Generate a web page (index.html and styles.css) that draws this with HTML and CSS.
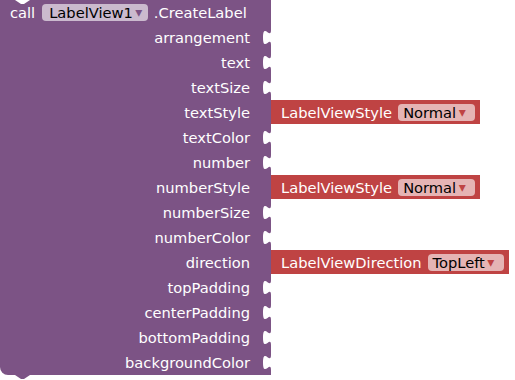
FILE: index.html
```html
<!DOCTYPE html>
<html>
<head>
<meta charset="utf-8">
<link rel="stylesheet" href="styles.css">
</head>
<body>
<div class="block">
  <div class="row">
    <div class="cell head">
      <span class="lbl">call</span>
      <span class="pill pill-p">LabelView1<span class="arr arr-p">▾</span></span>
      <span class="lbl">.CreateLabel</span>
    </div>
  </div>
  <div class="row"><div class="cell"><span class="lbl">arrangement</span><svg class="notch" width="8" height="25" viewBox="0 0 8 25"><path d="M8,5 C8,15 0,-3 0,12.5 C0,28 8,10 8,20 Z"/></svg></div></div>
  <div class="row"><div class="cell"><span class="lbl">text</span><svg class="notch" width="8" height="25" viewBox="0 0 8 25"><path d="M8,5 C8,15 0,-3 0,12.5 C0,28 8,10 8,20 Z"/></svg></div></div>
  <div class="row"><div class="cell"><span class="lbl">textSize</span><svg class="notch" width="8" height="25" viewBox="0 0 8 25"><path d="M8,5 C8,15 0,-3 0,12.5 C0,28 8,10 8,20 Z"/></svg></div></div>
  <div class="row">
    <div class="cell"><span class="lbl">textStyle</span><span class="gap"></span></div>
    <div class="helper">
      <svg class="tab" width="8" height="24" viewBox="0 0 8 24"><path d="M8,5 C8,15 0,-3 0,12.5 C0,28 8,10 8,20 Z"/></svg>
      <div class="hbody"><span class="lbl">LabelViewStyle</span><span class="pill pill-r">Normal<span class="arr arr-r">▾</span></span></div>
    </div>
  </div>
  <div class="row"><div class="cell"><span class="lbl">textColor</span><svg class="notch" width="8" height="25" viewBox="0 0 8 25"><path d="M8,5 C8,15 0,-3 0,12.5 C0,28 8,10 8,20 Z"/></svg></div></div>
  <div class="row"><div class="cell"><span class="lbl">number</span><svg class="notch" width="8" height="25" viewBox="0 0 8 25"><path d="M8,5 C8,15 0,-3 0,12.5 C0,28 8,10 8,20 Z"/></svg></div></div>
  <div class="row">
    <div class="cell"><span class="lbl">numberStyle</span><span class="gap"></span></div>
    <div class="helper">
      <svg class="tab" width="8" height="24" viewBox="0 0 8 24"><path d="M8,5 C8,15 0,-3 0,12.5 C0,28 8,10 8,20 Z"/></svg>
      <div class="hbody"><span class="lbl">LabelViewStyle</span><span class="pill pill-r">Normal<span class="arr arr-r">▾</span></span></div>
    </div>
  </div>
  <div class="row"><div class="cell"><span class="lbl">numberSize</span><svg class="notch" width="8" height="25" viewBox="0 0 8 25"><path d="M8,5 C8,15 0,-3 0,12.5 C0,28 8,10 8,20 Z"/></svg></div></div>
  <div class="row"><div class="cell"><span class="lbl">numberColor</span><svg class="notch" width="8" height="25" viewBox="0 0 8 25"><path d="M8,5 C8,15 0,-3 0,12.5 C0,28 8,10 8,20 Z"/></svg></div></div>
  <div class="row">
    <div class="cell"><span class="lbl">direction</span><span class="gap"></span></div>
    <div class="helper">
      <svg class="tab" width="8" height="24" viewBox="0 0 8 24"><path d="M8,5 C8,15 0,-3 0,12.5 C0,28 8,10 8,20 Z"/></svg>
      <div class="hbody"><span class="lbl">LabelViewDirection</span><span class="pill pill-r">TopLeft<span class="arr arr-r">▾</span></span></div>
    </div>
  </div>
  <div class="row"><div class="cell"><span class="lbl">topPadding</span><svg class="notch" width="8" height="25" viewBox="0 0 8 25"><path d="M8,5 C8,15 0,-3 0,12.5 C0,28 8,10 8,20 Z"/></svg></div></div>
  <div class="row"><div class="cell"><span class="lbl">centerPadding</span><svg class="notch" width="8" height="25" viewBox="0 0 8 25"><path d="M8,5 C8,15 0,-3 0,12.5 C0,28 8,10 8,20 Z"/></svg></div></div>
  <div class="row"><div class="cell"><span class="lbl">bottomPadding</span><svg class="notch" width="8" height="25" viewBox="0 0 8 25"><path d="M8,5 C8,15 0,-3 0,12.5 C0,28 8,10 8,20 Z"/></svg></div></div>
  <div class="row"><div class="cell last"><span class="lbl">backgroundColor</span><svg class="notch" width="8" height="25" viewBox="0 0 8 25"><path d="M8,5 C8,15 0,-3 0,12.5 C0,28 8,10 8,20 Z"/></svg></div></div>
</div>
</body>
</html>
```

FILE: styles.css
```css
html, body {
  margin: 0;
  padding: 0;
  background: #ffffff;
}
body {
  font-family: "DejaVu Sans", "Liberation Sans", sans-serif;
  font-size: 14.67px;
  color: #ffffff;
  width: 515px;
  height: 380px;
  overflow: hidden;
}
.block {
  display: flex;
  flex-direction: column;
}
.row {
  display: flex;
  align-items: flex-start;
  height: 25px;
}
.cell {
  position: relative;
  width: 271px;
  height: 25px;
  box-sizing: border-box;
  background: #7c5385;
  display: flex;
  align-items: center;
  justify-content: flex-end;
  flex: none;
}
.cell .lbl {
  margin-right: 13px;
  line-height: 25px;
  white-space: nowrap;
}
.notch {
  display: block;
  flex: none;
}
.notch path {
  fill: #ffffff;
}
.gap {
  display: block;
  width: 8px;
  flex: none;
}
.head {
  justify-content: flex-start;
  padding-left: 10px;
  gap: 6px;
}
.head .lbl {
  margin-right: 0;
}
.head::before {
  content: "";
  position: absolute;
  left: 15px;
  top: 0;
  width: 15px;
  height: 4px;
  background: #ffffff;
  clip-path: polygon(0 0, 40% 100%, 60% 100%, 100% 0);
}
.last {
  border-bottom-left-radius: 8px;
}
.last::after {
  content: "";
  position: absolute;
  left: 15px;
  top: 25px;
  width: 15px;
  height: 4px;
  background: #7c5385;
  clip-path: polygon(0 0, 40% 100%, 60% 100%, 100% 0);
}
.pill {
  display: inline-flex;
  align-items: center;
  height: 17px;
  border-radius: 4px;
  color: #000000;
  line-height: 17px;
  white-space: nowrap;
}
.pill-p {
  background: #cbbace;
  padding: 0 5px 0 7px;
  margin-left: 1px;
}
.pill-r {
  background: #e5b4b4;
  padding: 0 9px 0 5px;
  margin-left: 6px;
}
.arr {
  display: inline-block;
  width: 8px;
  text-align: center;
  font-size: 14px;
  margin-left: 2px;
}
.arr-p {
  color: #7c5385;
}
.arr-r {
  color: #bf4343;
}
.helper {
  display: flex;
  margin-left: -8px;
  flex: none;
}
.tab {
  display: block;
  flex: none;
}
.tab path {
  fill: #bf4343;
}
.hbody {
  height: 24px;
  background: #bf4343;
  display: flex;
  align-items: center;
  padding: 0 5px 0 10px;
  white-space: nowrap;
}
```
